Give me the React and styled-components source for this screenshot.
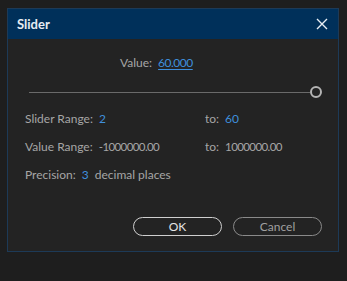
import React from 'react';
import styled, { createGlobalStyle } from 'styled-components';

const GlobalStyle = createGlobalStyle`
  html, body {
    margin: 0;
    padding: 0;
    background: #1e1e1e;
    width: 347px;
    height: 281px;
    overflow: hidden;
  }
  body {
    font-family: Lato, "Open Sans", sans-serif;
  }
`;

export default function App() {
  return (
    <>
      <GlobalStyle />
      <Page>
        <Dialog>
          <TitleBar>
            <Title>Slider</Title>
            <CloseButton aria-label="Close">
              <svg width="12" height="12" viewBox="0 0 12 12">
                <path d="M1 1L11 11M11 1L1 11" stroke="#e8eef4" strokeWidth="1.4" />
              </svg>
            </CloseButton>
          </TitleBar>
          <Body>
            <ValueRow>
              <Label>Value:</Label>
              <Link>60.000</Link>
            </ValueRow>
            <SliderRow>
              <Track />
              <Thumb />
            </SliderRow>
            <Grid>
              <Field>
                <Label>Slider Range:</Label>
                <Number>2</Number>
              </Field>
              <Field>
                <Label>to:</Label>
                <Number>60</Number>
              </Field>
              <Field>
                <Label>Value Range:</Label>
                <Plain>-1000000.00</Plain>
              </Field>
              <Field>
                <Label>to:</Label>
                <Plain>1000000.00</Plain>
              </Field>
              <Field>
                <Label>Precision:</Label>
                <Number>3</Number>
                <Label>decimal places</Label>
              </Field>
            </Grid>
            <Buttons>
              <Button primary>OK</Button>
              <Button>Cancel</Button>
            </Buttons>
          </Body>
        </Dialog>
      </Page>
    </>
  );
}

const Page = styled.div`
  padding: 8px 8px 0 7px;
`;

const Dialog = styled.div`
  width: 330px;
  height: 242px;
  background: #232323;
  border: 1px solid #1d3a57;
  display: flex;
  flex-direction: column;
`;

const TitleBar = styled.div`
  height: 30px;
  background: #00305a;
  display: flex;
  align-items: center;
  justify-content: space-between;
  padding: 0 10px 0 9px;
  box-sizing: border-box;
`;

const Title = styled.div`
  color: #e6ecf2;
  font-size: 13px;
  font-weight: 700;
`;

const CloseButton = styled.div`
  display: flex;
  margin-top: -1px;
`;

const Body = styled.div`
  flex: 1;
  display: flex;
  flex-direction: column;
  padding: 0 16px 0 17px;
`;

const ValueRow = styled.div`
  display: flex;
  gap: 6px;
  margin: 16px 0 0 95px;
  font-size: 12px;
`;

const Label = styled.span`
  color: #a6a6a6;
  font-size: 12px;
`;

const Link = styled.span`
  color: #3f8fdc;
  text-decoration: underline;
  text-underline-offset: 2px;
  letter-spacing: -0.5px;
`;

const SliderRow = styled.div`
  display: flex;
  align-items: center;
  margin-top: 16px;
  padding-left: 4px;
`;

const Track = styled.div`
  flex: 1;
  height: 1px;
  background: #6a6a6a;
`;

const Thumb = styled.div`
  width: 8px;
  height: 8px;
  border: 2px solid #b4b4b4;
  border-radius: 50%;
`;

const Grid = styled.div`
  display: grid;
  grid-template-columns: 180px 1fr;
  row-gap: 13px;
  margin-top: 13px;
`;

const Field = styled.div`
  display: flex;
  gap: 6px;
  align-items: baseline;
`;

const Number = styled.span`
  color: #3f8fdc;
  font-size: 12px;
`;

const Plain = styled.span`
  color: #a6a6a6;
  font-size: 11.5px;
  letter-spacing: -0.6px;
`;

const Buttons = styled.div`
  display: flex;
  justify-content: flex-end;
  gap: 11px;
  margin-top: auto;
  margin-bottom: 15px;
`;

const Button = styled.div`
  width: 89px;
  height: 19px;
  box-sizing: border-box;
  border-radius: 10px;
  border: 1px solid ${p => (p.primary ? '#cfcfcf' : '#8a8a8a')};
  color: ${p => (p.primary ? '#e4e4e4' : '#a0a0a0')};
  display: flex;
  align-items: center;
  justify-content: center;
  font-size: 12px;
`;
